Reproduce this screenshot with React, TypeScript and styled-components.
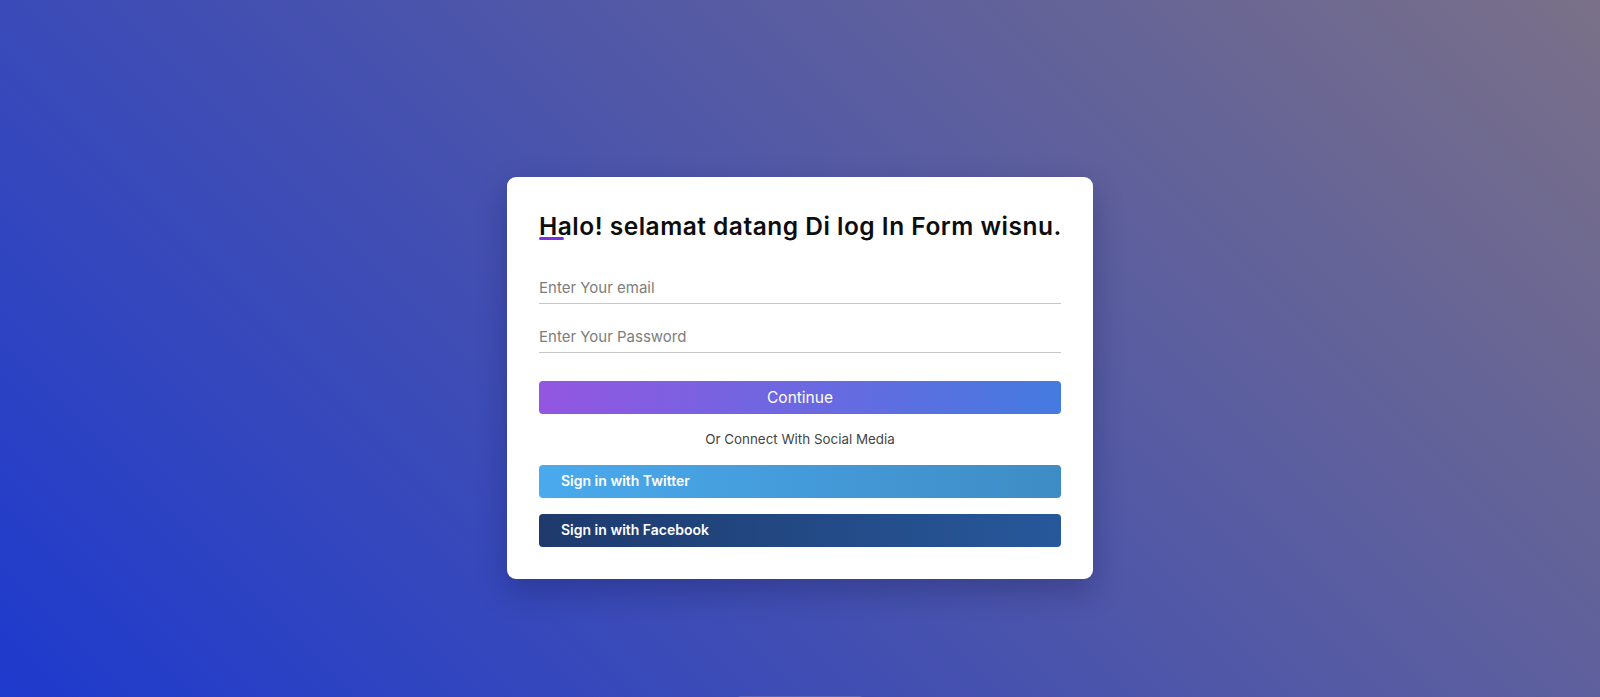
import React from "react";
import styled, { createGlobalStyle } from "styled-components";

const GlobalStyle = createGlobalStyle`
  html, body {
    margin: 0;
    padding: 0;
  }
  body {
    min-height: 100vh;
    font-family: Inter, "Noto Sans", sans-serif;
    background: linear-gradient(45deg, #1e3acd 0%, #7a7088 100%);
    background-attachment: fixed;
    overflow: hidden;
  }
  * { box-sizing: border-box; }
`;

const Page = styled.main`
  display: flex;
  flex-direction: column;
  align-items: center;
  padding-top: 177px;
  min-height: 100vh;
`;

const Card = styled.form`
  width: 586px;
  background: #ffffff;
  border-radius: 9px;
  padding: 34px 32px 32px;
  box-shadow: 0 12px 30px rgba(10, 15, 60, 0.28);
  display: flex;
  flex-direction: column;
`;

const Title = styled.h2`
  position: relative;
  margin: 0;
  font-size: 24.5px;
  line-height: 30px;
  font-weight: 600;
  color: #0d0d0d;
  letter-spacing: 0.5px;
  white-space: nowrap;

  &::after {
    content: "";
    position: absolute;
    left: 0;
    top: 26px;
    width: 25px;
    height: 3px;
    border-radius: 2px;
    background: linear-gradient(to right, #8a2be2, #6a35e6);
  }
`;

const Fields = styled.div`
  display: flex;
  flex-direction: column;
  gap: 17px;
  margin-top: 31px;
`;

const Input = styled.input`
  width: 100%;
  height: 32px;
  border: none;
  border-bottom: 1px solid #c8c8c8;
  outline: none;
  padding: 0;
  font-family: Inter, "Noto Sans", sans-serif;
  font-size: 15px;
  color: #333;
  background: transparent;

  &::placeholder {
    color: #7d7d7d;
  }
`;

const PrimaryButton = styled.button`
  margin-top: 28px;
  width: 100%;
  height: 33px;
  border: none;
  border-radius: 4px;
  background: linear-gradient(to right, #9356e0, #447ae0);
  color: #ffffff;
  font-family: Inter, "Noto Sans", sans-serif;
  font-size: 15.5px;
  font-weight: 400;
  cursor: pointer;
`;

const Divider = styled.p`
  margin: 15px 0 16px;
  text-align: center;
  font-size: 13.4px;
  line-height: 20px;
  color: #444;
`;

const Socials = styled.div`
  display: flex;
  flex-direction: column;
  gap: 16px;
`;

const SocialButton = styled.button<{ $from: string; $to: string }>`
  width: 100%;
  height: 33px;
  border: none;
  border-radius: 4px;
  padding: 0 22px 2px;
  text-align: left;
  background: linear-gradient(to right, ${(p) => p.$from}, ${(p) => p.$to});
  color: #ffffff;
  font-family: Inter, "Noto Sans", sans-serif;
  font-size: 14px;
  font-weight: 600;
  cursor: pointer;
`;

const FooterHint = styled.div`
  margin-top: 117px;
  width: 126px;
  height: 30px;
  border-radius: 4px;
  background: rgba(255, 255, 255, 0.14);
`;

export default function App() {
  return (
    <>
      <GlobalStyle />
      <Page>
        <Card onSubmit={(e) => e.preventDefault()}>
          <Title>Halo! selamat datang Di log In Form wisnu.</Title>
          <Fields>
            <Input type="email" placeholder="Enter Your email" />
            <Input type="password" placeholder="Enter Your Password" />
          </Fields>
          <PrimaryButton type="submit">Continue</PrimaryButton>
          <Divider>Or Connect With Social Media</Divider>
          <Socials>
            <SocialButton type="button" $from="#4aaaed" $to="#3e8cc5">
              Sign in with Twitter
            </SocialButton>
            <SocialButton type="button" $from="#1e3a6d" $to="#27589b">
              Sign in with Facebook
            </SocialButton>
          </Socials>
        </Card>
        <FooterHint />
      </Page>
    </>
  );
}
